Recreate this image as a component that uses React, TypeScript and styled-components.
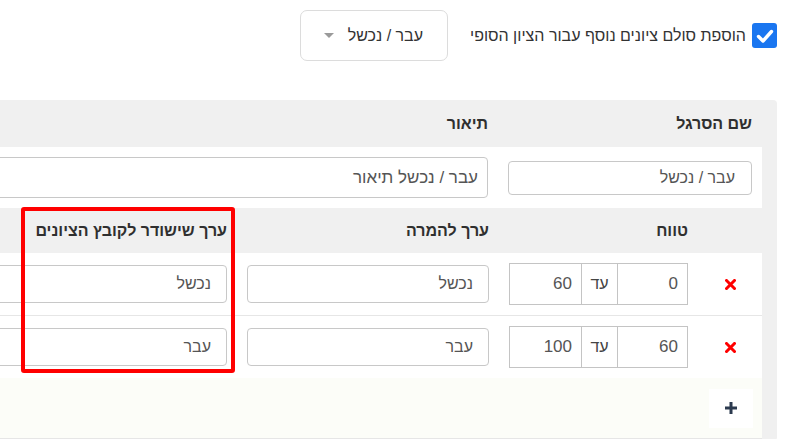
import * as React from 'react';
import styled, { createGlobalStyle } from 'styled-components';

const GlobalStyle = createGlobalStyle`
  html, body {
    margin: 0;
    padding: 0;
    background: #fff;
    overflow: hidden;
  }
  body {
    direction: rtl;
    font-family: "Liberation Sans", Arial, sans-serif;
    color: #333;
  }
`;

const Page = styled.div`
  position: relative;
  width: 787px;
  height: 439px;
  overflow: hidden;
  padding-right: 10px;
  box-sizing: border-box;
`;

const TopBar = styled.div`
  display: flex;
  align-items: center;
  gap: 22px;
  padding-top: 10px;
  margin-bottom: 39px;
`;

const CheckLabel = styled.label`
  display: flex;
  align-items: center;
  gap: 6px;
  font-size: 16px;
  color: #333;
`;

const CheckBox = styled.span`
  width: 25px;
  height: 25px;
  border-radius: 3px;
  background: #1a76f0;
  display: flex;
  align-items: center;
  justify-content: center;
`;

const Dropdown = styled.div`
  width: 148px;
  height: 51px;
  box-sizing: border-box;
  border: 1px solid #dcdcdc;
  border-radius: 7px;
  display: flex;
  align-items: center;
  justify-content: space-between;
  padding: 0 24px 0 23px;
  font-size: 16px;
  color: #333;
`;

const Caret = styled.span`
  width: 0;
  height: 0;
  border-left: 5px solid transparent;
  border-right: 5px solid transparent;
  border-top: 5px solid #9a9a9a;
`;

const Panel = styled.div`
  width: 1000px;
  background: #f0f0f0;
  border-radius: 4px;
  padding: 0 15px 2px;
  box-sizing: border-box;
`;

const HeadRow = styled.div<{ cols: string; h: number }>`
  display: grid;
  grid-template-columns: ${p => p.cols};
  height: ${p => p.h}px;
  align-items: center;
`;

const HeadCell = styled.div`
  padding: 0 10px;
  font-size: 16px;
  font-weight: bold;
  color: #2f2f2f;
`;

const BodyRow = styled.div<{ cols: string; h?: number; divider?: boolean }>`
  display: grid;
  grid-template-columns: ${p => p.cols};
  align-items: center;
  background: #fff;
  ${p => (p.h ? `height: ${p.h}px;` : 'padding: 10px 0;')}
  border-bottom: ${p => (p.divider ? '1px solid #e6e6e6' : 'none')};
`;

const Cell = styled.div<{ center?: boolean }>`
  padding: 0 10px;
  display: flex;
  justify-content: ${p => (p.center ? 'center' : 'flex-start')};
`;

const TextInput = styled.input<{ h: number; pad?: number; size17?: boolean }>`
  width: 100%;
  height: ${p => p.h}px;
  box-sizing: border-box;
  border: 1px solid #c8c8c8;
  border-radius: 4px;
  padding: 0 ${p => p.pad ?? 15}px;
  font-family: inherit;
  font-size: ${p => (p.size17 ? 17 : 16)}px;
  color: #555;
  background: #fff;
  direction: rtl;
  outline: none;
`;

const RangeGroup = styled.div`
  display: flex;
  height: 42px;
`;

const RangeInput = styled.input<{ w: number }>`
  width: ${p => p.w}px;
  height: 42px;
  box-sizing: border-box;
  border: 1px solid #c4c4c4;
  border-radius: 0;
  padding: 0 9px;
  font-family: inherit;
  font-size: 17px;
  color: #555;
  direction: rtl;
  outline: none;
`;

const Addon = styled.span`
  width: 35px;
  height: 42px;
  box-sizing: border-box;
  border-top: 1px solid #c4c4c4;
  border-bottom: 1px solid #c4c4c4;
  display: flex;
  align-items: center;
  justify-content: center;
  font-size: 16px;
  color: #444;
`;

const Footer = styled.div`
  height: 60px;
  background: #fcfdf8;
  border-bottom: 1px solid #e6e6e6;
  display: flex;
  align-items: center;
  padding-right: 9px;
`;

const AddButton = styled.button`
  width: 44px;
  height: 39px;
  border: none;
  background: #fff;
  display: flex;
  align-items: center;
  justify-content: center;
  padding: 0;
`;

const Highlight = styled.div`
  position: absolute;
  top: 207px;
  right: 552px;
  width: 214px;
  height: 166px;
  box-sizing: border-box;
  border: 4px solid #ff0000;
  border-radius: 3px;
  pointer-events: none;
`;

const NAME_COLS = '264px 1fr';
const SCALE_COLS = '64px 199px 262px 1fr';

const rows = [
  { from: '0', to: '60', value: 'נכשל' },
  { from: '60', to: '100', value: 'עבר' }
];

const CheckMark = () => (
  <svg width="18" height="18" viewBox="0 0 18 18">
    <polyline points="2.5,9.5 7,14 15.5,4.5" fill="none" stroke="#fff" strokeWidth="3.4" strokeLinecap="round" strokeLinejoin="round" />
  </svg>
);

const RemoveIcon = () => (
  <svg width="11" height="11" viewBox="0 0 11 11">
    <path d="M1.5 1.5 L9.5 9.5 M9.5 1.5 L1.5 9.5" stroke="#ff0000" strokeWidth="3" strokeLinecap="square" />
  </svg>
);

const PlusIcon = () => (
  <svg width="12" height="12" viewBox="0 0 12 12">
    <path d="M6 0 V12 M0 6 H12" stroke="#2c3a4f" strokeWidth="3" />
  </svg>
);

export default function App() {
  return (
    <>
      <GlobalStyle />
      <Page>
        <TopBar>
          <CheckLabel>
            <CheckBox>
              <CheckMark />
            </CheckBox>
            הוספת סולם ציונים נוסף עבור הציון הסופי
          </CheckLabel>
          <Dropdown>
            <span>עבר / נכשל</span>
            <Caret />
          </Dropdown>
        </TopBar>

        <Panel>
          <HeadRow cols={NAME_COLS} h={47}>
            <HeadCell>שם הסרגל</HeadCell>
            <HeadCell>תיאור</HeadCell>
          </HeadRow>
          <BodyRow cols={NAME_COLS} h={61}>
            <Cell>
              <TextInput h={34} pad={16} defaultValue="עבר / נכשל" />
            </Cell>
            <Cell>
              <TextInput h={41} pad={9} size17 defaultValue="עבר / נכשל תיאור" />
            </Cell>
          </BodyRow>

          <HeadRow cols={SCALE_COLS} h={45}>
            <HeadCell />
            <HeadCell>טווח</HeadCell>
            <HeadCell>ערך להמרה</HeadCell>
            <HeadCell>ערך שישודר לקובץ הציונים</HeadCell>
          </HeadRow>
          {rows.map((row, i) => (
            <BodyRow key={i} cols={SCALE_COLS} divider={i < rows.length - 1}>
              <Cell center>
                <RemoveIcon />
              </Cell>
              <Cell>
                <RangeGroup>
                  <RangeInput w={71} defaultValue={row.from} />
                  <Addon>עד</Addon>
                  <RangeInput w={73} defaultValue={row.to} />
                </RangeGroup>
              </Cell>
              <Cell>
                <TextInput h={38} defaultValue={row.value} />
              </Cell>
              <Cell>
                <TextInput h={38} defaultValue={row.value} />
              </Cell>
            </BodyRow>
          ))}
          <Footer>
            <AddButton>
              <PlusIcon />
            </AddButton>
          </Footer>
        </Panel>

        <Highlight />
      </Page>
    </>
  );
}
